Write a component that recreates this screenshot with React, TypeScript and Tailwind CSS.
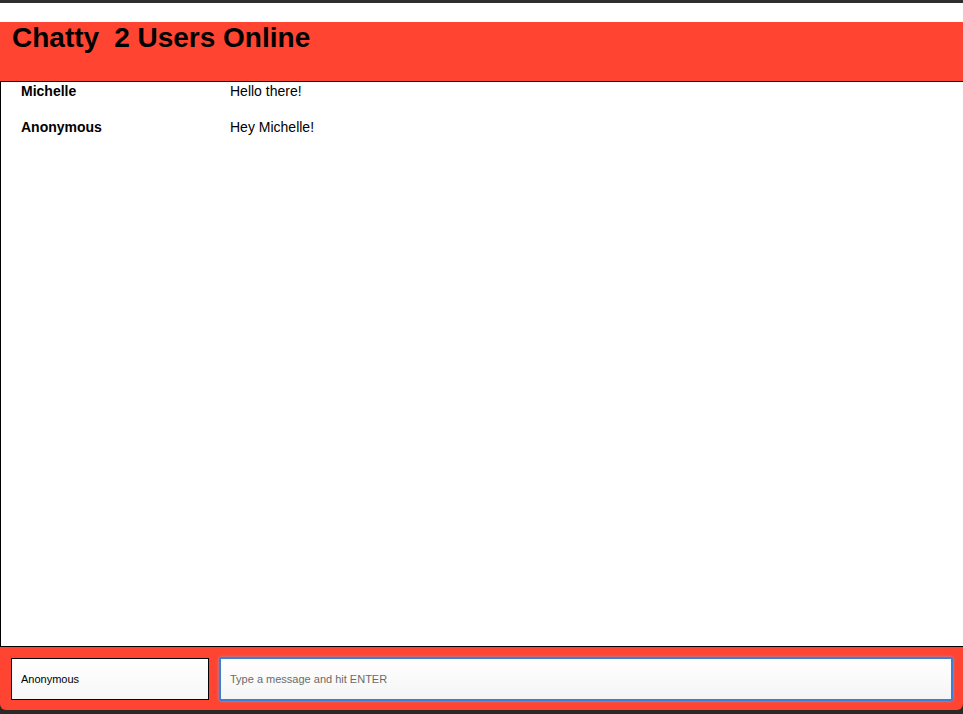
const messages = [
  { id: 1, username: "Michelle", content: "Hello there!" },
  { id: 2, username: "Anonymous", content: "Hey Michelle!" },
];

export default function App() {
  return (
    <div
      className="flex h-[714px] w-[963px] flex-col overflow-hidden bg-[#2a2926]"
      style={{ fontFamily: '"Liberation Sans", Arial, sans-serif' }}
    >
      <div className="h-[3px] shrink-0 bg-[#2e2e2e]" />
      <div className="h-[19px] shrink-0 bg-white" />
      <nav className="flex h-[60px] shrink-0 items-start border-b border-black bg-[#ff4431] pl-[12px] pt-[16px]">
        <h1 className="flex gap-[15px] text-[28px] font-bold leading-[0px] text-black">
          <span>Chatty</span>
          <span>2 Users Online</span>
        </h1>
      </nav>
      <main className="flex-1 border-l border-black bg-white">
        {messages.map((m) => (
          <div key={m.id} className="flex h-[36px] text-[14px] leading-[18px] text-black">
            <span className="w-[229px] shrink-0 pl-[20px] font-bold">{m.username}</span>
            <span>{m.content}</span>
          </div>
        ))}
      </main>
      <footer className="flex h-[64px] shrink-0 items-center gap-[10px] rounded-b-[6px] border-t border-black bg-[#ff4431] pl-[11px] pr-[10px]">
        <input
          defaultValue="Anonymous"
          className="h-[42px] w-[198px] border border-black bg-gradient-to-b from-white to-[#f7f7f7] px-[9px] text-[11px] text-black outline-none"
        />
        <input
          placeholder="Type a message and hit ENTER"
          className="h-[44px] flex-1 rounded-[2px] border-2 border-[#3e7fd4] bg-gradient-to-b from-white to-[#f5f5f5] px-[9px] text-[11px] text-black shadow-[0_0_3px_#7aa7e6] outline-none placeholder:text-[#6b6b6b]"
        />
      </footer>
      <div className="h-[4px] shrink-0" />
    </div>
  );
}
